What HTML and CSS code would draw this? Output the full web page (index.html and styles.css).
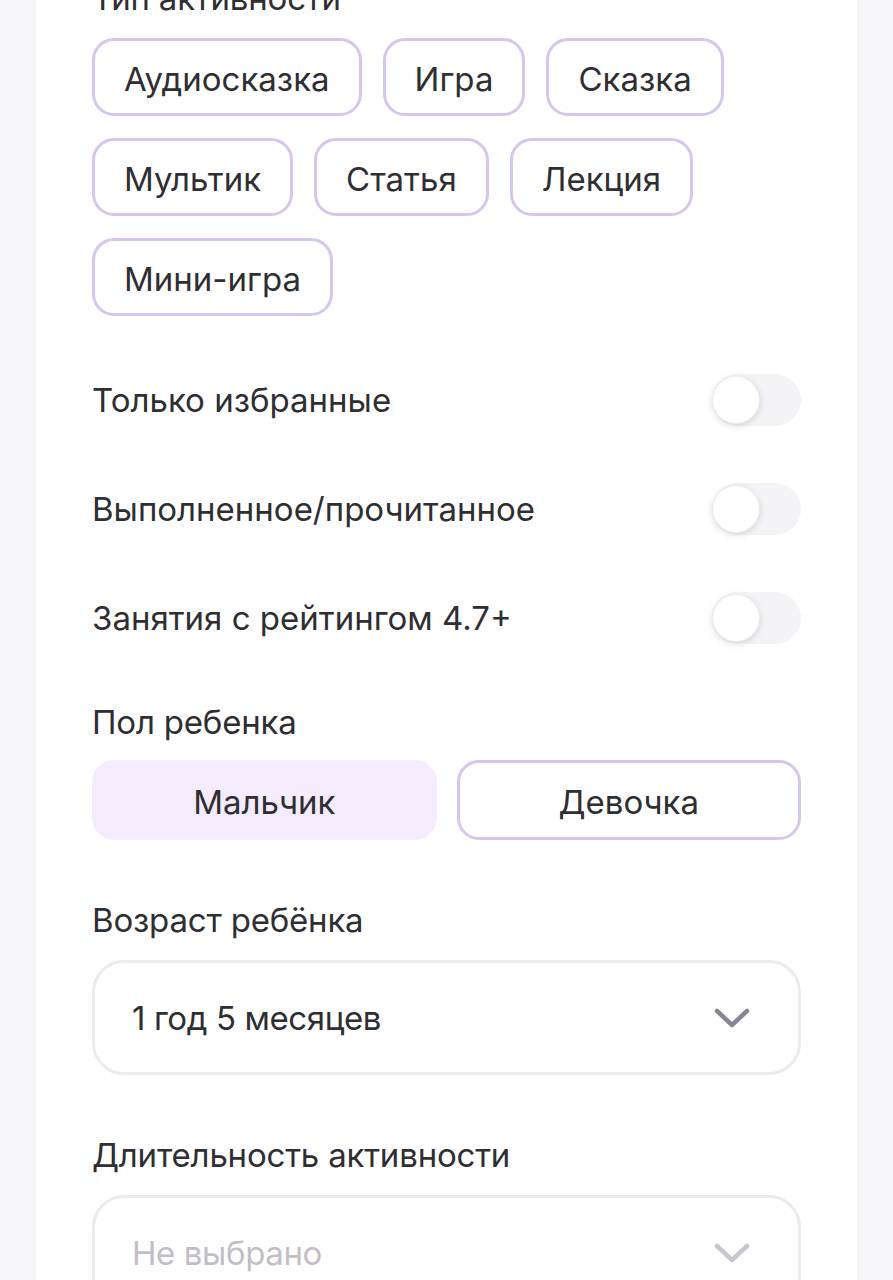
FILE: index.html
```html
<!DOCTYPE html>
<html lang="ru">
<head>
    <meta charset="UTF-8">
    <meta name="viewport" content="width=device-width, initial-scale=1.0">
    <title>Фильтры</title>
    <link rel="stylesheet" href="styles.css">
</head>
<body>
    <main class="card">
        <section class="group">
            <h2 class="label">Тип активности</h2>
            <div class="chips">
                <button class="chip">Аудиосказка</button>
                <button class="chip">Игра</button>
                <button class="chip">Сказка</button>
                <button class="chip">Мультик</button>
                <button class="chip">Статья</button>
                <button class="chip">Лекция</button>
                <button class="chip">Мини-игра</button>
            </div>
        </section>

        <section class="toggles">
            <label class="toggle-row">
                <span>Только избранные</span>
                <span class="switch"><span class="knob"></span></span>
            </label>
            <label class="toggle-row">
                <span>Выполненное/прочитанное</span>
                <span class="switch"><span class="knob"></span></span>
            </label>
            <label class="toggle-row">
                <span>Занятия с рейтингом 4.7+</span>
                <span class="switch"><span class="knob"></span></span>
            </label>
        </section>

        <section class="group">
            <h2 class="label">Пол ребенка</h2>
            <div class="segments">
                <button class="segment active">Мальчик</button>
                <button class="segment">Девочка</button>
            </div>
        </section>

        <section class="group">
            <h2 class="label">Возраст ребёнка</h2>
            <div class="select">
                <span>1 год 5 месяцев</span>
                <svg class="chevron" width="36" height="20" viewBox="0 0 36 20"><path d="M3 3 L18 17 L33 3" fill="none" stroke="currentColor" stroke-width="4.5" stroke-linecap="round" stroke-linejoin="round"/></svg>
            </div>
        </section>

        <section class="group">
            <h2 class="label">Длительность активности</h2>
            <div class="select empty">
                <span>Не выбрано</span>
                <svg class="chevron" width="36" height="20" viewBox="0 0 36 20"><path d="M3 3 L18 17 L33 3" fill="none" stroke="currentColor" stroke-width="4.5" stroke-linecap="round" stroke-linejoin="round"/></svg>
            </div>
        </section>
    </main>
</body>
</html>
```

FILE: styles.css
```css
/* Global Styles */
body {
    font-family: 'Inter', 'Noto Sans', sans-serif;
    margin: 0;
    padding: 0;
    background-color: #f5f5f7;
    color: #2e2e33;
}

.card {
    margin: -22px 36px 0;
    padding: 0 56px 40px;
    background-color: #fff;
    min-height: 1400px;
}

.label {
    margin: 0;
    font-size: 33px;
    font-weight: 400;
    line-height: 40px;
    letter-spacing: -0.2px;
}

/* Chips */
.chips {
    display: flex;
    flex-wrap: wrap;
    gap: 22px 21px;
    margin-top: 20px;
}

.chip {
    font-family: inherit;
    font-size: 33px;
    line-height: 40px;
    color: #2e2e33;
    background: #fff;
    border: 3px solid #d6c6ef;
    border-radius: 22px;
    padding: 18px 29px 14px;
}

/* Toggles */
.toggles {
    display: flex;
    flex-direction: column;
    gap: 53px;
    margin-top: 56px;
}

.toggle-row {
    display: flex;
    align-items: center;
    justify-content: space-between;
    height: 56px;
    font-size: 33px;
}

.switch {
    width: 89px;
    height: 52px;
    border-radius: 26px;
    background-color: #f4f4f6;
    display: flex;
    align-items: center;
}

.knob {
    width: 48px;
    height: 48px;
    border-radius: 50%;
    background: #fff;
    box-shadow: 0 2px 7px rgba(0, 0, 0, 0.13);
    border: 1px solid #ececee;
    box-sizing: border-box;
}

.toggles + .group {
    margin-top: 56px;
}

/* Segments */
.segments {
    display: grid;
    grid-template-columns: 1fr 1fr;
    gap: 20px;
    margin-top: 18px;
}

.segment {
    font-family: inherit;
    font-size: 33px;
    line-height: 40px;
    color: #2e2e33;
    height: 80px;
    padding-top: 4px;
    border-radius: 22px;
    background: #fff;
    border: 3px solid #d6c6ef;
}

.segment.active {
    background-color: #f4ecfc;
    border-color: #f4ecfc;
}

/* Selects */
.group + .group {
    margin-top: 60px;
}

.select {
    margin-top: 20px;
    height: 115px;
    box-sizing: border-box;
    border: 3px solid #ebebed;
    border-radius: 32px;
    padding: 0 48px 0 37px;
    display: flex;
    align-items: center;
    justify-content: space-between;
    font-size: 33px;
    letter-spacing: -0.4px;
}

.chevron {
    color: #8b8494;
}

.select.empty {
    color: #c2bec8;
}

.select.empty .chevron {
    color: #c9c5cf;
}
```
